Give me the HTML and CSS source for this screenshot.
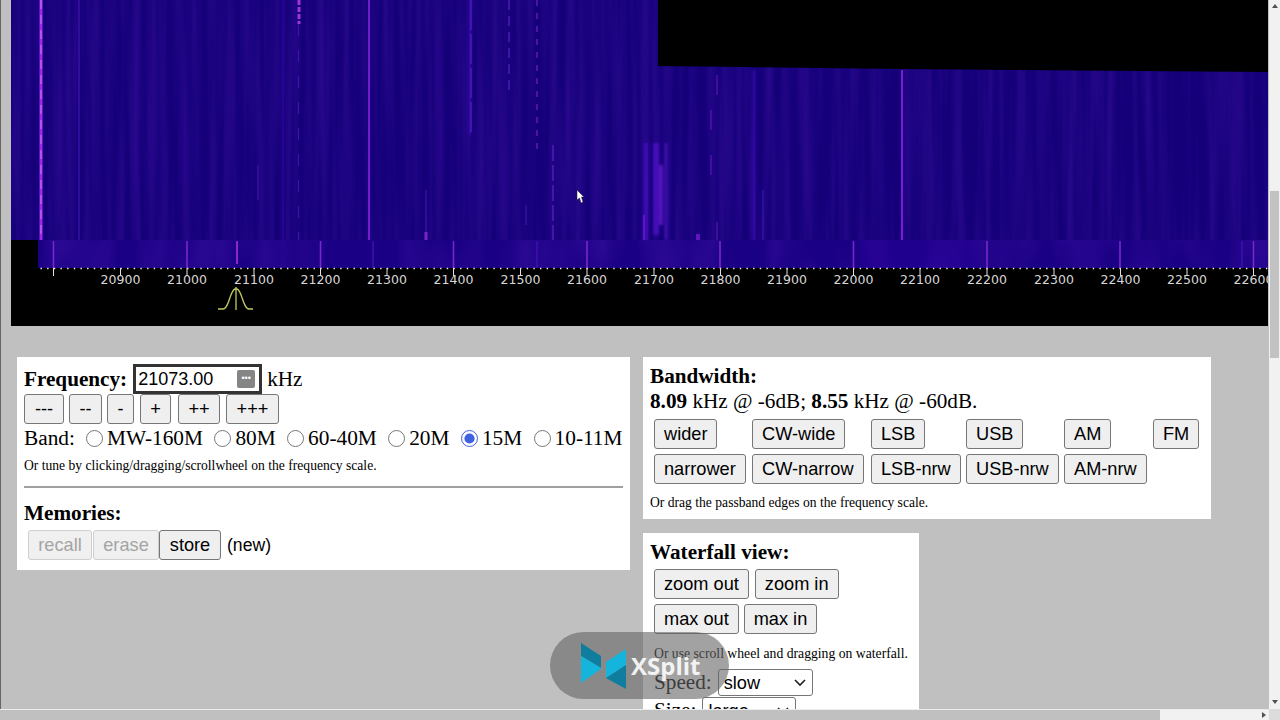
FILE: index.html
```html
<!DOCTYPE html>
<html lang="en">
<head>
<meta charset="utf-8">
<title>WebSDR</title>
<link rel="stylesheet" href="styles.css">
</head>
<body>
<div class="app">
  <main class="viewport">
    <svg class="waterfall" viewBox="11 0 1257 326" width="1257" height="326" xmlns="http://www.w3.org/2000/svg">
      <defs>
        <filter id="soft" x="-5%" y="-5%" width="110%" height="110%"><feGaussianBlur stdDeviation="0.6"/></filter>
        <filter id="softer" x="-60%" y="-5%" width="220%" height="110%"><feGaussianBlur stdDeviation="1.4"/></filter>
        <filter id="streaks" x="0" y="0" width="100%" height="100%">
          <feTurbulence type="fractalNoise" baseFrequency="0.12 0.004" numOctaves="2" seed="7"/>
          <feColorMatrix type="matrix" values="0 0 0 0 0.14  0 0 0 0 0.02  0 0 0 0 0.58  0.45 0 0 0 -0.16"/>
        </filter>
        <filter id="streaks-low" x="0" y="0" width="100%" height="100%">
          <feTurbulence type="fractalNoise" baseFrequency="0.03 0.01" numOctaves="2" seed="3"/>
          <feColorMatrix type="matrix" values="0 0 0 0 0.14  0 0 0 0 0.02  0 0 0 0 0.6  0.5 0 0 0 -0.18"/>
        </filter>
      </defs>
      <rect x="11" y="0" width="1257" height="326" fill="#000"/>
      <rect x="11" y="0" width="1257" height="240" fill="#15007a"/>
      <rect x="11" y="0" width="647" height="240" filter="url(#streaks)"/>
      <rect x="658" y="66" width="610" height="174" filter="url(#streaks)"/>
      <rect x="38" y="240" width="1230" height="28" fill="#1a0084"/>
      <rect x="38" y="240" width="1230" height="28" filter="url(#streaks-low)"/>
      <rect x="860" y="240" width="120" height="28" fill="#2a00a0" opacity=".35"/>
      <polygon points="658,0 1268,0 1268,72 900,69 658,66" fill="#000"/>

      <g filter="url(#softer)" fill="none">
        <path d="M470 0V135M754 70V240" stroke="#3a10b0" stroke-width="3" opacity=".8"/>
        <path d="M646 143V240" stroke="#3a0cb0" stroke-width="5"/>
        <path d="M666 143V240" stroke="#400eb4" stroke-width="3"/>
        <path d="M656 143V235" stroke="#4a10c0" stroke-width="5"/>
        <path d="M661 165V225" stroke="#6a1ccc" stroke-width="3"/>
      </g>

      <g filter="url(#soft)" fill="none">
        <path d="M41 0V240" stroke="#a028ea" stroke-width="3"/>
        <path d="M41 0V240" stroke="#c47cf0" stroke-width="1" stroke-dasharray="9 6"/>
        <path d="M369 0V240" stroke="#7c1ed4" stroke-width="1.8"/>
        <path d="M902 70V240" stroke="#7a1ed2" stroke-width="2"/>
        <path d="M299 0V24" stroke="#a034d8" stroke-width="3" stroke-dasharray="5 2"/>
        <path d="M298.500 24V240" stroke="#3c12a8" stroke-width="1.2" stroke-dasharray="12 14"/>
        <path d="M79 0V240" stroke="#3c10ac" stroke-width="1.4"/>
        <path d="M283 0V240" stroke="#2e08a0" stroke-width="1.4"/>
        <path d="M471 0V135" stroke="#4416ac" stroke-width="1.8" stroke-dasharray="30 4"/>
        <path d="M509 0V90" stroke="#3e12a8" stroke-width="2" stroke-dasharray="10 6"/>
        <path d="M537 0V150" stroke="#6a20bc" stroke-width="1.3" stroke-dasharray="6 7"/>
        <path d="M553 145V240" stroke="#4a16ae" stroke-width="1.8" stroke-dasharray="16 4"/>
        <path d="M426 232V240" stroke="#7a20c8" stroke-width="3"/>
        <path d="M426 190V232" stroke="#3a10a4" stroke-width="1.4"/>
        <path d="M258 165V200" stroke="#3e12a8" stroke-width="1.2"/>
        <path d="M526 205V225" stroke="#4214aa" stroke-width="1.2"/>
        <path d="M717 75V95M711 110V130M711 155V175M717 222V240" stroke="#5a1ab4" stroke-width="1.2"/>
        <path d="M763 240V190" stroke="#3c10a8" stroke-width="1.3"/>
        <path d="M644 215V240" stroke="#5a18c0" stroke-width="2.4"/>
        <path d="M698 234V240" stroke="#5e18bc" stroke-width="4"/>
      </g>

      <g filter="url(#soft)" stroke="#7a26d0" stroke-width="1.6">
        <path d="M53.500 241V268M187 241V268M320.500 241V268M453.500 241V268M587 241V268M720 241V268M853.500 241V268M987 241V268M1120 241V268M1253.500 241V268"/>
        <path d="M237 241V264" stroke="#8a28d0" stroke-width="2"/>
        <path d="M373 241V268M537 241V268M1242 241V268" stroke="#3c10ac"/>
      </g>

      <path class="scale-dots" d="M40.500 268.500H1268"/>
      <path class="scale-ticks" d="M53.500 268V276M120.500 268V276M187 268V276M254 268V276M320.500 268V276M387 268V276M453.500 268V276M520.500 268V276M587 268V276M654 268V276M720.500 268V276M787 268V276M853.500 268V276M920 268V276M987 268V276M1054 268V276M1120.500 268V276M1187 268V276M1253.500 268V276"/>

      <g class="scale-labels">
        <text x="120.500" y="284">20900</text><text x="187" y="284">21000</text><text x="254" y="284">21100</text>
        <text x="320.500" y="284">21200</text><text x="387" y="284">21300</text><text x="453.500" y="284">21400</text>
        <text x="520.500" y="284">21500</text><text x="587" y="284">21600</text><text x="654" y="284">21700</text>
        <text x="720.500" y="284">21800</text><text x="787" y="284">21900</text><text x="853.500" y="284">22000</text>
        <text x="920" y="284">22100</text><text x="987" y="284">22200</text><text x="1054" y="284">22300</text>
        <text x="1120.500" y="284">22400</text><text x="1187" y="284">22500</text><text x="1253.500" y="284">22600</text>
      </g>

      <path class="passband" d="M218 309H223C229 309 230 290 235 289H237C242 290 243 309 249 309H253M236 287V310"/>

      <polygon class="cursor" points="577,190 577,200 579.500,198 581,203 583,202 581.500,197 584,197"/>
    </svg>

    <div class="panels">
      <section class="panel tune">
        <div class="freq-row">
          <b class="heading">Frequency:</b>
          <span class="freq-box"><span class="freq-value">21073.00</span><span class="freq-badge">&#8226;&#8226;&#8226;</span></span>
          <span class="freq-unit">kHz</span>
        </div>
        <div class="step-row">
          <button class="btn step-a">---</button>
          <button class="btn step-b">--</button>
          <button class="btn step-c">-</button>
          <button class="btn step-d">+</button>
          <button class="btn step-e">++</button>
          <button class="btn step-f">+++</button>
        </div>
        <div class="band-row">
          <span class="band-label">Band:</span>
          <label class="band"><input type="radio" name="band">MW-160M</label>
          <label class="band"><input type="radio" name="band">80M</label>
          <label class="band"><input type="radio" name="band">60-40M</label>
          <label class="band"><input type="radio" name="band">20M</label>
          <label class="band"><input type="radio" name="band" checked>15M</label>
          <label class="band"><input type="radio" name="band">10-11M</label>
        </div>
        <p class="hint tune-hint">Or tune by clicking/dragging/scrollwheel on the frequency scale.</p>
        <hr class="rule">
        <div class="heading memories">Memories:</div>
        <div class="mem-row">
          <button class="btn" disabled>recall</button><button class="btn" disabled>erase</button><button class="btn store">store</button>
          <span class="mem-new">(new)</span>
        </div>
      </section>

      <div class="right-col">
        <section class="panel bandwidth">
          <div class="heading">Bandwidth:</div>
          <div class="bw-values"><b>8.09</b> kHz @ -6dB; <b>8.55</b> kHz @ -60dB.</div>
          <div class="bw-grid">
            <span><button class="btn">wider</button></span>
            <span><button class="btn">CW-wide</button></span>
            <span><button class="btn">LSB</button></span>
            <span><button class="btn">USB</button></span>
            <span><button class="btn">AM</button></span>
            <span><button class="btn">FM</button></span>
            <span><button class="btn">narrower</button></span>
            <span><button class="btn">CW-narrow</button></span>
            <span><button class="btn">LSB-nrw</button></span>
            <span><button class="btn">USB-nrw</button></span>
            <span><button class="btn">AM-nrw</button></span>
          </div>
          <p class="hint bw-hint">Or drag the passband edges on the frequency scale.</p>
        </section>

        <section class="panel view">
          <div class="heading">Waterfall view:</div>
          <div class="view-row"><button class="btn">zoom out</button><button class="btn">zoom in</button></div>
          <div class="view-row tight"><button class="btn">max out</button><button class="btn">max in</button></div>
          <p class="hint view-hint">Or use scroll wheel and dragging on waterfall.</p>
          <div class="select-row">Speed: <select class="pick speed"><option>slow</option></select></div>
          <div class="select-row">Size: <select class="pick size"><option>large</option></select></div>
        </section>
      </div>
    </div>
  </main>

  <div class="vscroll">
    <span class="arrow up"></span>
    <span class="vthumb"></span>
    <span class="arrow down"></span>
  </div>
  <div class="hscroll">
    <span class="hthumb"></span>
    <span class="arrow right"></span>
  </div>
  <div class="corner"></div>

  <div class="watermark">
    <svg class="xlogo" viewBox="0 0 46 46" width="46" height="46" xmlns="http://www.w3.org/2000/svg">
      <polygon points="0,0 20,13 20,25 0,13" fill="#0f7d9e"/>
      <polygon points="0,13 20,25 20,26 0,40" fill="#14b4dc"/>
      <polygon points="45,6 45,22 25,35 25,19" fill="#14b4dc"/>
      <polygon points="25,35 45,22 45,46" fill="#0f7d9e"/>
    </svg>
    <span class="xsplit">XSplit</span>
  </div>
</div>
</body>
</html>
```

FILE: styles.css
```css
* { box-sizing: border-box; }
html, body { margin: 0; height: 720px; overflow: hidden; }
body {
  font-family: "Liberation Serif", "Times New Roman", serif;
  font-size: 21.2px;
  color: #000;
  background: #c0c0c0;
}
.app {
  position: relative;
  display: grid;
  grid-template-columns: 1269px 11px;
  grid-template-rows: 709px 11px;
  width: 1280px;
  height: 720px;
}

/* Main area */
.viewport {
  overflow: hidden;
  padding-left: 10px;
  border-left: 1px solid #666;
  background: #c0c0c0;
}
.waterfall { display: block; }
.scale-dots { stroke: #f0f0f0; stroke-width: 1.4; stroke-dasharray: 1.4 5.26; fill: none; }
.scale-ticks { stroke: #e0e0e0; stroke-width: 1; fill: none; }
.scale-labels text {
  font-family: "DejaVu Sans", sans-serif;
  font-size: 12.5px;
  fill: #d8d8d8;
  text-anchor: middle;
}
.passband { stroke: #c4c860; stroke-width: 1.3; fill: none; }
.cursor { fill: #fff; stroke: #222; stroke-width: .5; }

.panels {
  display: flex;
  align-items: flex-start;
  gap: 13px;
  margin: 31px 0 0 6px;
}
.panel { background: #fff; padding: 0 7px; }
.heading { font-weight: bold; }
.hint { margin: 0; font-size: 13.6px; line-height: 16px; white-space: nowrap; }

/* Shared buttons */
.btn {
  height: 30px;
  padding: 0 9px;
  border: 1px solid #767676;
  border-radius: 3px;
  background: #efefef;
  color: #000;
  font-family: "Liberation Sans", Arial, sans-serif;
  font-size: 18.2px;
  line-height: 28px;
}
.btn:disabled { color: #a4a4a4; border-color: #cfcfcf; background: #f0f0f0; }

/* Tuning panel */
.tune { width: 613px; height: 213px; padding-top: 7px; }
.freq-row { display: flex; align-items: center; gap: 6px; height: 30px; }
.freq-box {
  display: flex;
  align-items: center;
  justify-content: space-between;
  width: 129px;
  height: 30px;
  padding: 0 4px 0 2px;
  border: 3px solid #333;
  font-family: "Liberation Sans", Arial, sans-serif;
  font-size: 18px;
}
.freq-badge {
  width: 18px;
  height: 18px;
  border-radius: 2px;
  background: #858585;
  color: #fff;
  font-size: 9px;
  line-height: 17px;
  text-align: center;
}
.freq-unit { margin-left: -1px; }
.step-row { display: flex; height: 30px; }
.step-row .btn { padding: 0; }
.step-a { width: 40px; margin-right: 5px; }
.step-b { width: 33px; margin-right: 5px; }
.step-c { width: 27px; margin-right: 6px; }
.step-d { width: 31px; margin-right: 7px; }
.step-e { width: 42px; margin-right: 6px; }
.step-f { width: 53px; }
.band-row { display: flex; align-items: center; height: 28px; font-size: 21.33px; white-space: nowrap; }
.band-label { flex: none; width: 62px; }
.band { flex: none; display: flex; align-items: center; margin-right: 11.4px; }
.band:last-child { margin-right: 0; }
.band input {
  width: 17px;
  height: 17px;
  margin: 0 4px 0 0;
  accent-color: #3f62e0;
}
.tune-hint { margin-top: 6px; }
.rule { height: 2px; margin: 12px 0 0; border: 0; background: #a0a0a0; }
.memories { margin-top: 12px; line-height: 26px; }
.mem-row { display: flex; align-items: center; margin: 4px 0 0 4px; }
.mem-row .btn { padding: 0; }
.mem-row .btn:nth-child(1) { width: 64px; margin-right: 1px; }
.mem-row .btn:nth-child(2) { width: 66px; }
.mem-row .store { width: 62px; }
.mem-new {
  margin-left: 6px;
  font-family: "Liberation Sans", Arial, sans-serif;
  font-size: 17.6px;
}

/* Right column */
.right-col { display: flex; flex-direction: column; align-items: flex-start; gap: 14px; }
.bandwidth { width: 568px; height: 162px; padding-top: 7px; }
.bandwidth .heading, .bw-values { line-height: 25px; }
.bw-grid {
  display: grid;
  grid-template-columns: 98px 119px 95px 98px 89px auto;
  grid-auto-rows: 30px;
  row-gap: 5px;
  margin: 5px 0 0 4px;
}
.bw-hint { margin-top: 11px; }

.view { width: 276px; height: 240px; padding-top: 7px; }
.view .heading { line-height: 24px; }
.view-row { display: flex; gap: 6px; height: 30px; margin: 5px 0 0 4px; }
.view-row.tight { gap: 5px; }
.view-hint { margin: 12px 0 0 4px; font-size: 13.7px; }
.select-row { display: flex; align-items: center; gap: 6px; height: 27px; margin: 7px 0 0 4px; line-height: 27px; }
.select-row + .select-row { margin-top: 1px; }
.pick {
  appearance: none;
  height: 27px;
  padding: 0 0 0 5px;
  border: 1px solid #767676;
  border-radius: 3px;
  background: #fff url("data:image/svg+xml,%3Csvg xmlns='http://www.w3.org/2000/svg' width='12' height='8'%3E%3Cpath d='M1 1l5 5 5-5' fill='none' stroke='%23222' stroke-width='1.6'/%3E%3C/svg%3E") no-repeat right 6px center;
  font-family: "Liberation Sans", Arial, sans-serif;
  font-size: 18.2px;
}
.speed { width: 95px; }
.size { width: 94px; }

/* Scrollbars */
.vscroll {
  display: flex;
  flex-direction: column;
  align-items: center;
  background: #f1f1f1;
}
.vthumb { width: 9px; height: 167px; margin-top: 183px; background: #c2c2c2; }
.hscroll {
  display: flex;
  align-items: center;
  justify-content: space-between;
  padding-right: 3px;
  border-top: 1px solid #ececec;
  background: #f1f1f1;
}
.hthumb { width: 1160px; height: 10px; background: #c0c0c0; }
.corner { background: #dcdcdc; }
.arrow { display: block; width: 0; height: 0; border: 0 solid transparent; }
.arrow.up { margin-top: 4px; border-width: 0 3px 4px; border-bottom-color: #505050; }
.arrow.down { margin-top: auto; margin-bottom: 5px; border-width: 4px 3px 0; border-top-color: #505050; }
.arrow.right { border-width: 3px 0 3px 4px; border-left-color: #505050; }

/* Recorder watermark */
.watermark {
  position: absolute;
  left: 550px;
  top: 632px;
  display: flex;
  align-items: center;
  width: 179px;
  height: 67px;
  padding-left: 31px;
  border-radius: 34px;
  background: rgba(100, 100, 100, .6);
}
.xsplit {
  margin-left: 4px;
  color: rgba(255, 255, 255, .9);
  font-family: "Open Sans", "Liberation Sans", sans-serif;
  font-size: 24px;
  font-weight: 700;
}
```
